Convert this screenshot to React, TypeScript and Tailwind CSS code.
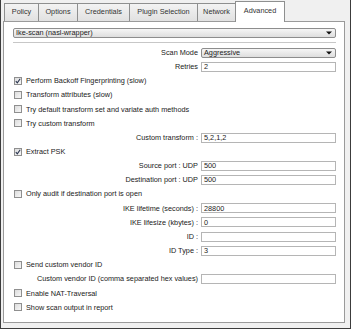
import React from 'react';

type Row =
  | { kind: 'select'; label: string; value: string }
  | { kind: 'input'; label: string; value: string }
  | { kind: 'check'; label: string; checked?: boolean };

const ROWS: Row[] = [
  { kind: 'select', label: 'Scan Mode', value: 'Aggressive' },
  { kind: 'input', label: 'Retries', value: '2' },
  { kind: 'check', label: 'Perform Backoff Fingerprinting (slow)', checked: true },
  { kind: 'check', label: 'Transform attributes (slow)' },
  { kind: 'check', label: 'Try default transform set and variate auth methods' },
  { kind: 'check', label: 'Try custom transform' },
  { kind: 'input', label: 'Custom transform :', value: '5,2,1,2' },
  { kind: 'check', label: 'Extract PSK', checked: true },
  { kind: 'input', label: 'Source port : UDP', value: '500' },
  { kind: 'input', label: 'Destination port : UDP', value: '500' },
  { kind: 'check', label: 'Only audit if destination port is open' },
  { kind: 'input', label: 'IKE lifetime (seconds) :', value: '28800' },
  { kind: 'input', label: 'IKE lifesize (kbytes) :', value: '0' },
  { kind: 'input', label: 'ID :', value: '' },
  { kind: 'input', label: 'ID Type :', value: '3' },
  { kind: 'check', label: 'Send custom vendor ID' },
  { kind: 'input', label: 'Custom vendor ID (comma separated hex values)', value: '' },
  { kind: 'check', label: 'Enable NAT-Traversal' },
  { kind: 'check', label: 'Show scan output in report' },
];

const TABS = [
  { name: 'Policy', w: 'w-[35px]' },
  { name: 'Options', w: 'w-[40px]' },
  { name: 'Credentials', w: 'w-[53px]' },
  { name: 'Plugin Selection', w: 'w-[69px]' },
  { name: 'Network', w: 'w-[39px]' },
];

function Arrow() {
  return (
    <svg width="6" height="4" viewBox="0 0 6 4" className="shrink-0">
      <path d="M0 0.5 H6 L3 3.5 Z" fill="#111" />
    </svg>
  );
}

function Select({ value, wide }: { value: string; wide?: boolean }) {
  return (
    <div
      className={`${wide ? 'w-full' : 'w-[135px]'} h-[10px] flex items-center justify-between pl-[2px] pr-[3px] border border-[#8d8d8d] rounded-[2px] bg-gradient-to-b from-[#f6f6f6] to-[#dedede]`}
    >
      <span className="leading-none">{value}</span>
      <Arrow />
    </div>
  );
}

function Checkbox({ checked }: { checked?: boolean }) {
  return (
    <div className="ml-[1px] w-[8px] h-[8px] border border-[#8f8f8f] bg-gradient-to-br from-[#dcdcdc] to-[#f7f7f7] flex items-center justify-center">
      {checked && (
        <svg width="6" height="6" viewBox="0 0 6 6">
          <path d="M0.8 3.2 L2.3 4.8 L5.2 0.8" stroke="#2a3550" strokeWidth="1.1" fill="none" />
        </svg>
      )}
    </div>
  );
}

export default function App() {
  return (
    <div className="w-[351px] h-[329px] bg-[#f0f0f0] border-l border-r border-b border-[#3c3c3c] font-['Liberation_Sans',Arial,sans-serif] text-[7.3px] text-[#222] overflow-hidden">
      <div className="flex items-end h-[21px] pl-[3px]">
        {TABS.map((t) => (
          <div
            key={t.name}
            className={`${t.w} h-[18px] -mr-px flex items-center justify-center border border-b-0 border-[#8e8f8f] bg-gradient-to-b from-[#f3f3f3] to-[#e1e1e1] text-[#333]`}
          >
            {t.name}
          </div>
        ))}
        <div className="relative z-10 w-[50px] h-[21px] -mb-px flex items-center justify-center border border-b-0 border-[#8e8f8f] bg-white text-[#333] pb-[2px]">
          Advanced
        </div>
      </div>

      <div className="ml-[2px] w-[342px] h-[302px] border border-[#9a9a9a] bg-white pl-[9px] pr-[8px] pt-[6px]">
        <Select value="Ike-scan (nasl-wrapper)" wide />
        <div className="mt-[4px] h-px bg-[#c7c7c7]" />
        <div className="mt-[2.5px] flex flex-col">
          {ROWS.map((r, i) => (
            <div key={i} className="h-[14.17px] flex items-center">
              {r.kind === 'check' ? (
                <div className="flex items-center gap-[4px]">
                  <Checkbox checked={r.checked} />
                  <span className="leading-none">{r.label}</span>
                </div>
              ) : (
                <div className="flex items-center gap-[3px]">
                  <span className="w-[185px] text-right leading-none whitespace-nowrap">{r.label}</span>
                  {r.kind === 'select' ? (
                    <Select value={r.value} />
                  ) : (
                    <div className="w-[135px] h-[10px] flex items-center pl-[2px] border border-[#b5b5b5] bg-white leading-none">
                      {r.value}
                    </div>
                  )}
                </div>
              )}
            </div>
          ))}
        </div>
      </div>
    </div>
  );
}
